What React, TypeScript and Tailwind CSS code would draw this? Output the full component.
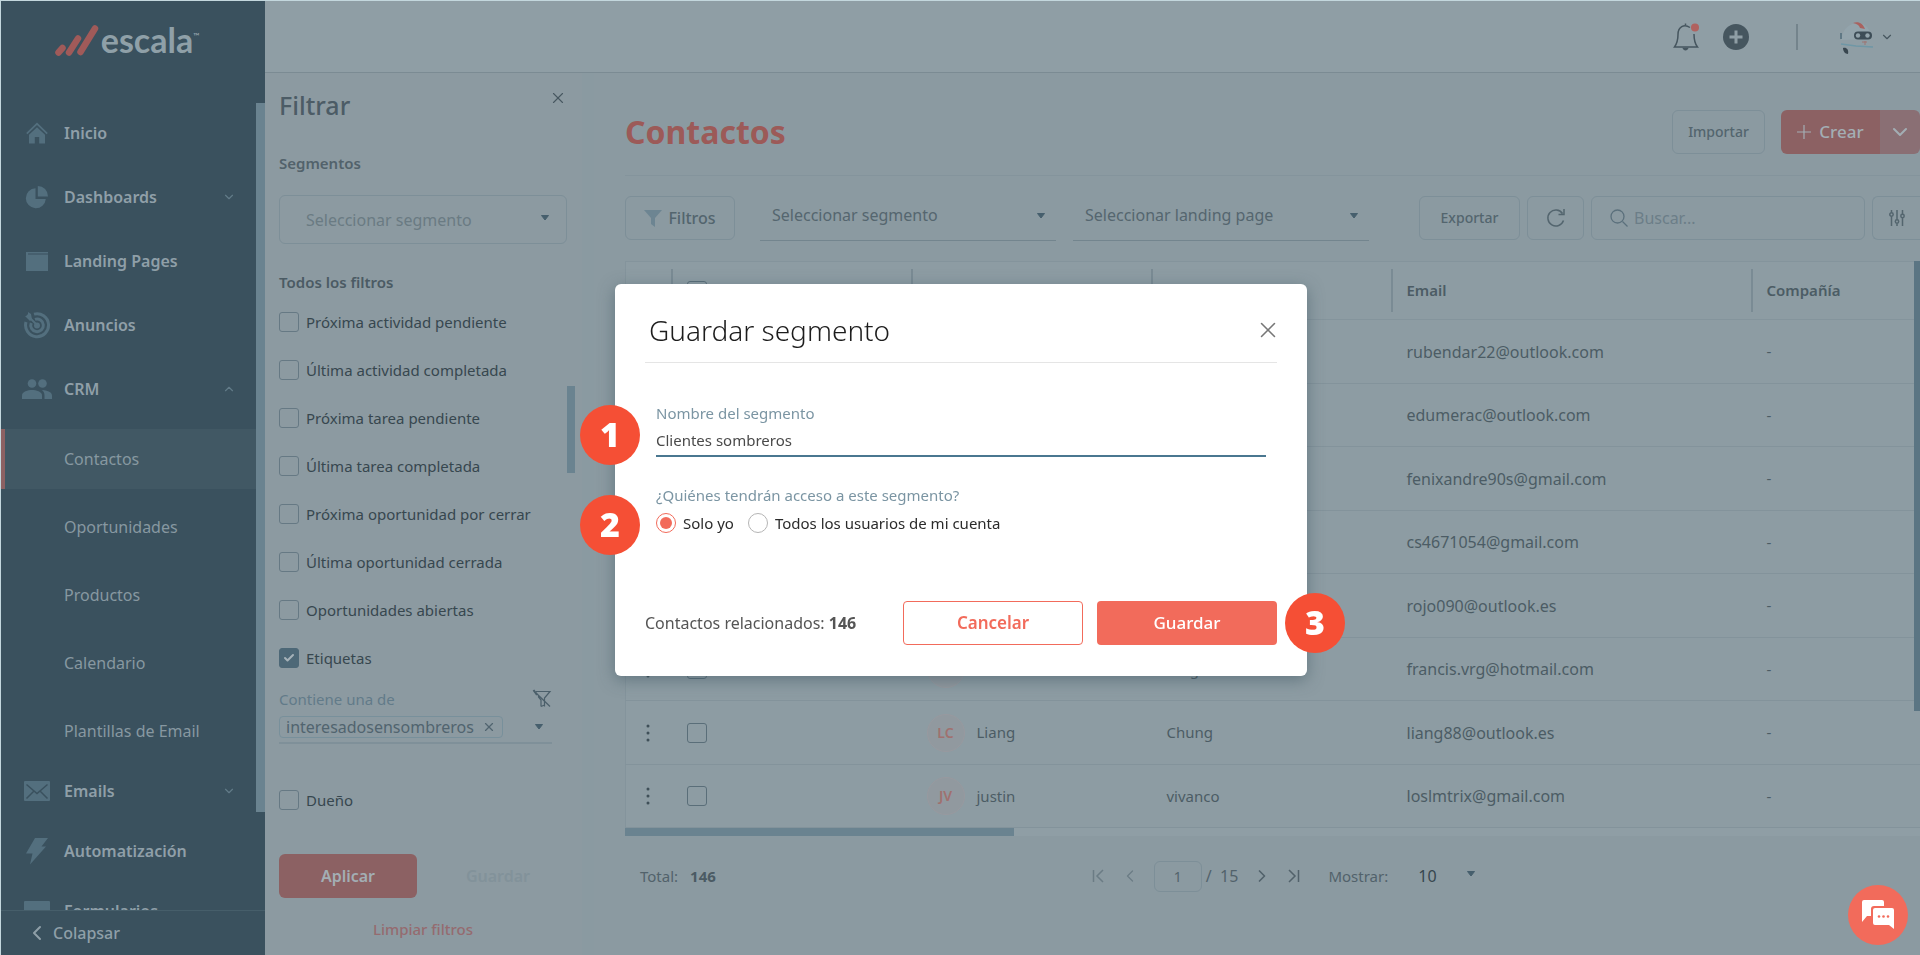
import { useState, type ReactNode } from 'react'
import clsx from 'clsx'
import { LuCheck, LuChevronDown, LuChevronLeft, LuChevronRight, LuChevronUp, LuX } from 'react-icons/lu'

type NavItem = { label: string; icon: ReactNode; chevron?: 'up' | 'down' }

const HomeIcon = () => (
  <svg viewBox="0 0 24 24" className="h-6 w-6" fill="currentColor">
    <path d="M12 1.500 1.200 12l1.200 1.200L12 4l9.600 9.200 1.200-1.200z" />
    <path d="M12 6.200 4 13.800V22.500h5.800v-6.500h4.400v6.500H20v-8.700z" />
  </svg>
)

const PieIcon = () => (
  <svg viewBox="0 0 24 24" className="h-6 w-6" fill="currentColor">
    <path d="M10.500 3.200A10 10 0 1 0 20.800 14H10.500z" />
    <path d="M12.800 1v10.500H23A10.300 10.300 0 0 0 12.800 1z" />
  </svg>
)

const WindowIcon = () => (
  <svg viewBox="0 0 24 24" className="h-6 w-6" fill="currentColor">
    <path d="M1 3h22v1.500H1zM1 5.500h22v16.500H1z" />
    <path d="M1 3h2v4H1z" />
  </svg>
)

const TargetIcon = () => (
  <svg viewBox="0 0 28 28" className="h-7 w-7" fill="none" stroke="currentColor" strokeWidth="3">
    <path d="M11 3.100A11.500 11.500 0 1 1 3 11" />
    <path d="M12 8.400A6.300 6.300 0 1 1 8.200 12" />
    <circle cx="14" cy="14.500" r="1.500" />
    <path d="M4 4l9 9" strokeWidth="2" />
    <path d="M2 5l5 5 2-1.500L8 3 5 1v4z" fill="currentColor" stroke="none" />
  </svg>
)

const PeopleIcon = () => (
  <svg viewBox="0 0 30 20" className="h-5 w-[30px]" fill="currentColor">
    <circle cx="10" cy="4.500" r="4.300" />
    <circle cx="20.500" cy="4.500" r="4.300" />
    <path d="M0 20v-3.500C0 12.500 6 11 10 11s10 1.500 10 5.500V20z" />
    <path d="M20.500 11c4 .3 9.500 1.800 9.500 5.500V20h-7.500v-3.500c0-2.300-.9-4.100-2.600-5.400z" />
  </svg>
)

const MailIcon = () => (
  <svg viewBox="0 0 26 20" className="h-5 w-[26px]">
    <rect width="26" height="20" rx="1" fill="currentColor" />
    <path d="M2.500 3.500 13 12.500l10.500-9M2.500 17.500l7-7M23.500 17.500l-7-7" fill="none" stroke="#3a515e" strokeWidth="1.500" />
  </svg>
)

const BoltIcon = () => (
  <svg viewBox="0 0 24 28" className="h-7 w-6" fill="currentColor">
    <path d="M10 1h13l-6.500 8.500H21L5 27.500l2.500-11H1z" />
  </svg>
)

const FormIcon = () => (
  <svg viewBox="0 0 26 20" className="h-5 w-[26px]" fill="currentColor">
    <rect width="26" height="20" rx="1" />
  </svg>
)

const Caret = ({ className }: { className?: string }) => (
  <svg viewBox="0 0 10 8" className={clsx('pointer-events-none h-2 w-[10px]', className)} fill="#465f6d">
    <path d="M1.500 1.500h7L5 6z" stroke="#465f6d" strokeLinejoin="round" />
  </svg>
)

const mainNav: NavItem[] = [
  { label: 'Inicio', icon: <HomeIcon /> },
  { label: 'Dashboards', icon: <PieIcon />, chevron: 'down' },
  { label: 'Landing Pages', icon: <WindowIcon /> },
  { label: 'Anuncios', icon: <TargetIcon /> },
  { label: 'CRM', icon: <PeopleIcon />, chevron: 'up' },
]

const crmNav = ['Contactos', 'Oportunidades', 'Productos', 'Calendario', 'Plantillas de Email']

const moreNav: NavItem[] = [
  { label: 'Emails', icon: <MailIcon />, chevron: 'down' },
  { label: 'Automatización', icon: <BoltIcon /> },
  { label: 'Formularios', icon: <FormIcon /> },
]

const filters = [
  'Próxima actividad pendiente',
  'Última actividad completada',
  'Próxima tarea pendiente',
  'Última tarea completada',
  'Próxima oportunidad por cerrar',
  'Última oportunidad cerrada',
  'Oportunidades abiertas',
  'Etiquetas',
]

const contacts = [
  { initials: '', name: '', surname: '', email: 'rubendar22@outlook.com' },
  { initials: '', name: '', surname: '', email: 'edumerac@outlook.com' },
  { initials: '', name: '', surname: '', email: 'fenixandre90s@gmail.com' },
  { initials: '', name: '', surname: '', email: 'cs4671054@gmail.com' },
  { initials: '', name: '', surname: '', email: 'rojo090@outlook.es' },
  { initials: 'FV', name: 'Francis', surname: 'Vargas', email: 'francis.vrg@hotmail.com' },
  { initials: 'LC', name: 'Liang', surname: 'Chung', email: 'liang88@outlook.es' },
  { initials: 'JV', name: 'justin', surname: 'vivanco', email: 'loslmtrix@gmail.com' },
]

function Logo() {
  return (
    <a href="#inicio" aria-label="escala" className="flex items-center gap-0.5 text-[#8fa0a8]">
      <svg viewBox="0 0 44 31" className="h-[31px] w-11" stroke="#a05a59" strokeLinecap="round" strokeWidth="6.500">
        <path d="M3.500 27.500 7.500 23M14 27.500l9-14M25.500 27 40 3.500" />
      </svg>
      <span className="flex items-start font-[Lato,sans-serif] text-[34px] leading-10 font-bold">
        escala<span className="mt-3 text-[8px] leading-none">™</span>
      </span>
    </a>
  )
}

function NavLink({ item, className }: { item: NavItem; className?: string }) {
  return (
    <a href="#nav" className={clsx('flex items-center pr-5 pl-[21px] font-semibold text-[#8f9fa8]', className)}>
      <span className="mr-3 flex w-[30px] justify-center text-[#536f7e]">{item.icon}</span>
      {item.label}
      {item.chevron === 'down' && <LuChevronDown className="ml-auto h-3.5 w-3.5 text-[#627b88]" />}
      {item.chevron === 'up' && <LuChevronUp className="ml-auto h-3.5 w-3.5 text-[#627b88]" />}
    </a>
  )
}

function Sidebar() {
  return (
    <aside className="relative flex w-[264px] shrink-0 flex-col bg-[#3a515e]">
      <div className="flex h-[100px] shrink-0 items-start justify-center pt-[19px] pr-3">
        <Logo />
      </div>
      <nav className="min-h-0 flex-1 overflow-hidden pr-[9px] text-base">
        {mainNav.map((item) => (
          <NavLink key={item.label} item={item} className="h-16" />
        ))}
        <ul className="flex flex-col gap-2 pt-2">
          {crmNav.map((label, i) => (
            <li key={label}>
              <a
                href="#crm"
                className={clsx(
                  'flex h-15 items-center border-l-4 pl-[59px] text-[#8798a1]',
                  i === 0 ? 'border-[#8c6163] bg-[#415864]' : 'border-transparent',
                )}
              >
                {label}
              </a>
            </li>
          ))}
        </ul>
        {moreNav.map((item) => (
          <NavLink key={item.label} item={item} className="h-15" />
        ))}
      </nav>
      <div className="absolute top-[102px] right-0 h-[709px] w-[9px] bg-[#6a8390]" />
      <button className="flex h-[45px] shrink-0 items-center gap-1 border-t border-[#465e6a] pl-6 text-base font-medium text-[#8f9fa8]">
        <LuChevronLeft className="h-6 w-6" />
        Colapsar
      </button>
    </aside>
  )
}

function Avatar() {
  return (
    <svg viewBox="0 0 36 36" className="h-9 w-9">
      <path d="M3 21C5 9 12 4 20 4s13 7 13 16z" fill="#93a4ac" />
      <path d="M15 4c6-2 10 1 12 6l-5-1c-1-3-3-4-7-5z" fill="#a9625f" />
      <path d="M3 14v6" stroke="#5f7885" strokeWidth="2" />
      <rect x="16" y="12.500" width="18" height="8" rx="4" fill="#3d4d57" />
      <circle cx="20" cy="16.500" r="2.200" fill="#93a4ac" />
      <circle cx="29.500" cy="16.500" r="2.200" fill="#93a4ac" />
      <path d="M24 23h5M27 22v4" stroke="#9d7473" />
      <path d="M3 25l15 2 17 1" stroke="#6f97a6" strokeWidth="1.500" fill="none" />
      <path d="M5 29c3-1 6 1 5 6-3 0-5-3-5-6z" fill="#38464f" />
    </svg>
  )
}

function TopBar() {
  return (
    <header className="flex h-[72px] shrink-0 items-center justify-end border-b border-[#7b8b93] pr-[26px] text-[#46565f]">
      <button aria-label="Notificaciones">
        <svg viewBox="0 0 26 28" className="h-7 w-[26px]" fill="none" stroke="currentColor" strokeWidth="1.500">
          <path d="M17 4.500c-6-4-12-.5-12 7 0 6-1 9-3.500 12.500h23C22 21 21 17 21 11" />
          <path d="M12.500 2V.5M10.500 25.500a2.200 2.200 0 0 0 4 0z" fill="currentColor" />
          <circle cx="22" cy="4.500" r="4" fill="#b0625f" stroke="none" />
        </svg>
      </button>
      <button aria-label="Agregar" className="ml-6">
        <svg viewBox="0 0 26 26" className="h-[26px] w-[26px]">
          <circle cx="13" cy="13" r="13" fill="#46565f" />
          <path d="M13 6.500v13M6.500 13h13" stroke="#8f9ea5" strokeWidth="3" />
        </svg>
      </button>
      <span className="mr-10 ml-[47px] h-[26px] w-0.5 bg-[#74848c]" />
      <button aria-label="Cuenta" className="flex items-center gap-1.5">
        <Avatar />
        <LuChevronDown className="h-3.5 w-3.5" />
      </button>
    </header>
  )
}

function Checkbox({ label, checked }: { label: string; checked?: boolean }) {
  return (
    <label className="flex h-12 items-center gap-[7px] text-[15px] text-[#37474f]">
      <span className="relative flex h-5 w-5">
        <input
          type="checkbox"
          defaultChecked={checked}
          className="peer h-5 w-5 appearance-none rounded-[3px] border border-[#667984] checked:border-[#4d6877] checked:bg-[#4d6877]"
        />
        <LuCheck className="pointer-events-none absolute inset-1 hidden h-3 w-3 stroke-4 text-[#a5b2b9] peer-checked:block" />
      </span>
      {label}
    </label>
  )
}

function FilterPanel() {
  return (
    <section className="relative flex w-[317px] shrink-0 flex-col bg-[#8c9aa1] pt-4 pr-[15px] pl-3.5">
      <div className="flex h-8 items-start justify-between">
        <h2 className="text-[25px] leading-8 font-medium text-[#4c5c66]">Filtrar</h2>
        <button aria-label="Cerrar filtros" className="text-[#475761]">
          <LuX className="h-[18px] w-[18px]" strokeWidth={1.5} />
        </button>
      </div>
      <label htmlFor="segmento" className="mt-8 text-[15px] leading-5 font-semibold text-[#52626b]">
        Segmentos
      </label>
      <div className="relative mt-[22px]">
        <select
          id="segmento"
          className="h-[49px] w-full appearance-none rounded-md border border-[#7d8f98] px-6.5 text-base text-[#6a7b83]"
        >
          <option>Seleccionar segmento</option>
        </select>
        <Caret className="absolute top-[19px] right-[17px]" />
      </div>
      <h3 className="mt-[26px] text-[15px] leading-6 font-semibold text-[#4b5b64]">Todos los filtros</h3>
      <div className="mt-1">
        {filters.map((f) => (
          <Checkbox key={f} label={f} checked={f === 'Etiquetas'} />
        ))}
      </div>
      <div className="mr-[15px] h-[62px] border-b-2 border-[#7f9099]">
        <div className="flex h-[34px] items-center justify-between text-[15px] text-[#627b89]">
          Contiene una de
          <button aria-label="Quitar filtro">
            <svg viewBox="0 0 20 20" className="h-5 w-5" fill="none" stroke="#4b5f6a" strokeWidth="1.200">
              <path d="M4 2.500h14l-5.500 6.500v8.500M6.500 6v2l2.500 3v6.500M9 17.500l3.500-1.500M2 2l16 15.500" />
              <path d="M1.500 1 5 6" strokeWidth="2" />
            </svg>
          </button>
        </div>
        <div className="flex items-center justify-between pr-2">
          <span className="flex h-[22px] items-center gap-2 rounded border border-[#78909b] pr-1.5 pl-1.5 text-base text-[#51646f]">
            interesadosensombreros
            <button aria-label="Quitar etiqueta">
              <LuX className="h-3.5 w-3.5" />
            </button>
          </span>
          <Caret />
        </div>
      </div>
      <div className="mt-8">
        <Checkbox label="Dueño" />
      </div>
      <div className="mt-[30px] flex gap-3 text-base font-semibold">
        <button className="h-11 w-[139px] rounded-md bg-[#8c6163] text-[#a3aeb4]">Aplicar</button>
        <button disabled className="h-11 w-[139px] rounded-md text-[#82929a]">
          Guardar
        </button>
      </div>
      <button className="mt-[19px] self-center text-[15px] leading-6 font-medium text-[#956b6f]">Limpiar filtros</button>
      <div className="absolute top-[313px] right-[7px] h-[87px] w-2 bg-[#6a8390]" />
    </section>
  )
}

function ToolbarSelect({ label }: { label: string }) {
  return (
    <div className="relative w-[296px]">
      <select
        aria-label={label}
        className="h-[46px] w-full appearance-none border-b border-[#73858e] px-3 pb-1 text-base text-[#55666f]"
      >
        <option>{label}</option>
      </select>
      <Caret className="absolute top-[17px] right-2.5" />
    </div>
  )
}

const outline = 'flex h-11 items-center justify-center rounded-md border border-[#7d8f98] text-[#53656e]'

function Toolbar() {
  return (
    <div className="flex h-[86px] items-center border-t border-[#84949c] pb-0.5">
      <button className={clsx(outline, 'w-[110px] gap-1.5 text-base font-medium')}>
        <svg viewBox="0 0 18 18" className="h-[18px] w-[18px]" fill="#6d8592">
          <path d="M0 1h18l-7 8v9l-4-3V9z" />
        </svg>
        Filtros
      </button>
      <div className="ml-[25px] flex gap-[17px]">
        <ToolbarSelect label="Seleccionar segmento" />
        <ToolbarSelect label="Seleccionar landing page" />
      </div>
      <div className="ml-auto flex gap-[7px] text-sm font-medium">
        <button className={clsx(outline, 'w-[101px]')}>Exportar</button>
        <button aria-label="Actualizar" className={clsx(outline, 'w-[57px]')}>
          <svg viewBox="0 0 20 20" className="h-5 w-5" fill="none" stroke="currentColor" strokeWidth="1.500">
            <path d="M17.500 12.500A8 8 0 1 1 16.500 5.500M18 1v5.500h-5.500" />
          </svg>
        </button>
        <label className={clsx(outline, 'w-[274px] justify-start gap-1.5 pl-[18px]')}>
          <svg viewBox="0 0 18 18" className="h-[18px] w-[18px]" fill="none" stroke="#5b707c" strokeWidth="1.300">
            <circle cx="7.500" cy="7.500" r="6.500" />
            <path d="m12.500 12.500 5 5" />
          </svg>
          <input aria-label="Buscar" placeholder="Buscar..." className="w-50 text-base font-normal outline-none placeholder:text-[#6c7e88]" />
        </label>
        <button aria-label="Columnas" className={clsx(outline, 'w-12 rounded-r-none border-r-0')}>
          <svg viewBox="0 0 16 16" className="h-4 w-4" fill="none" stroke="currentColor" strokeWidth="1.500">
            <path d="M2.500 0v2.500M2.500 6.500V16M8 0v9.500M8 13.500V16M13.500 0v4M13.500 8v8" />
            <circle cx="2.500" cy="4.500" r="1.700" />
            <circle cx="8" cy="11.500" r="1.700" />
            <circle cx="13.500" cy="6" r="1.700" />
          </svg>
        </button>
      </div>
    </div>
  )
}

function Th({ children }: { children?: ReactNode }) {
  return (
    <th className="p-0 text-left">
      <div className="flex h-[43px] items-center border-l-2 border-[#7a8b94] pl-3.5 text-[15px] font-semibold">{children}</div>
    </th>
  )
}

function RowCheck({ label }: { label: string }) {
  return (
    <input
      type="checkbox"
      aria-label={label}
      className="block h-5 w-5 appearance-none rounded-[3px] border border-[#5a6e79]"
    />
  )
}

function ContactsTable() {
  return (
    <div className="relative">
      <table className="w-full table-fixed border-l border-[#84949c] bg-[#8d9ca3] text-[15px] text-[#4c5c65]">
        <colgroup>
          <col className="w-[45px]" />
          <col className="w-60" />
          <col className="w-60" />
          <col className="w-60" />
          <col className="w-[360px]" />
          <col />
        </colgroup>
        <thead>
          <tr className="h-[58px] border-y border-[#84949c]">
            <th className="p-0" />
            <Th>
              <RowCheck label="Seleccionar todos" />
            </Th>
            <Th />
            <Th />
            <Th>Email</Th>
            <Th>Compañía</Th>
          </tr>
        </thead>
        <tbody>
          {contacts.map((c) => (
            <tr key={c.email} className="h-[63px] border-b border-[#83939b] odd:h-16">
              <td className="p-0">
                <button aria-label="Acciones" className="flex w-full justify-center">
                  <svg viewBox="0 0 4 18" className="h-[18px] w-1" fill="#3f4f58">
                    <circle cx="2" cy="2" r="1.500" />
                    <circle cx="2" cy="9" r="1.500" />
                    <circle cx="2" cy="16" r="1.500" />
                  </svg>
                </button>
              </td>
              <td className="px-4 py-0">
                <RowCheck label={c.email} />
              </td>
              <td className="px-4 py-0">
                {c.initials && (
                  <div className="flex items-center gap-3">
                    <span className="flex h-[38px] w-[38px] items-center justify-center rounded-full border border-[#98999f] bg-[#91999f] text-sm font-semibold text-[#a0716f]">
                      {c.initials}
                    </span>
                    {c.name}
                  </div>
                )}
              </td>
              <td className="px-4 py-0">{c.surname}</td>
              <td className="px-4 py-0 text-base">{c.email}</td>
              <td className="px-4 py-0">-</td>
            </tr>
          ))}
        </tbody>
      </table>
      <div className="absolute top-0 right-0 h-[450px] w-1.5 bg-[#5b7583]" />
      <div className="h-2 bg-[#8f9ea5]">
        <div className="h-2 w-[30%] bg-[#6a8390]" />
      </div>
    </div>
  )
}

function PageFooter() {
  return (
    <footer className="flex h-20 items-center pl-[15px] text-[15px] text-[#52626b]">
      Total:
      <b className="ml-3 font-bold text-[#4b5b64]">146</b>
      <div className="ml-[376px] flex items-center">
        <button aria-label="Primera página" className="text-[#6b7c85]">
          <svg viewBox="0 0 12 14" className="h-3.5 w-3" fill="none" stroke="currentColor" strokeWidth="1.500">
            <path d="M1.500 1v12M11 1 5 7l6 6" />
          </svg>
        </button>
        <button aria-label="Anterior" className="ml-4 text-[#6b7c85]">
          <LuChevronLeft className="h-5 w-5" strokeWidth={1.5} />
        </button>
        <input
          aria-label="Página"
          defaultValue="1"
          className="ml-3.5 h-[31px] w-12 rounded-md border border-[#7d8f98] text-center text-sm"
        />
        <span className="ml-1 text-base">/&nbsp; 15</span>
        <button aria-label="Siguiente" className="ml-3.5">
          <LuChevronRight className="h-5 w-5" strokeWidth={2} />
        </button>
        <button aria-label="Última página" className="ml-4">
          <svg viewBox="0 0 12 14" className="h-3.5 w-3" fill="none" stroke="currentColor" strokeWidth="1.500">
            <path d="M10.500 1v12M1 1l6 6-6 6" />
          </svg>
        </button>
        <label htmlFor="mostrar" className="ml-7">
          Mostrar:
        </label>
        <div className="relative ml-[30px]">
          <select id="mostrar" className="w-[58px] appearance-none text-base text-[#37474f]">
            <option>10</option>
          </select>
          <Caret className="absolute top-1.5 right-0" />
        </div>
      </div>
    </footer>
  )
}

const Step = ({ n, className }: { n: number; className: string }) => (
  <span
    className={clsx(
      'absolute flex h-15 w-15 items-center justify-center rounded-full bg-[#f54f35] text-[34px] font-black text-white',
      className,
    )}
  >
    {n}
  </span>
)

function Radio({ label, checked }: { label: string; checked?: boolean }) {
  return (
    <label className="flex items-center gap-[7px]">
      <input
        type="radio"
        name="acceso"
        defaultChecked={checked}
        className="h-5 w-5 appearance-none rounded-full border border-[#b5b5b5] checked:border-[#f26b5b] checked:bg-[#f26b5b] checked:bg-clip-content checked:p-[3px]"
      />
      {label}
    </label>
  )
}

function SaveSegmentModal() {
  const [name, setName] = useState('Clientes sombreros')

  return (
    <div className="fixed inset-0 flex items-center justify-center pt-1 pl-0.5">
      <div
        role="dialog"
        aria-label="Guardar segmento"
        className="w-full max-w-[692px] rounded-md bg-white px-[30px] pb-[31px] shadow-[0_4px_16px_rgba(58,81,94,0.5)]"
      >
        <div className="flex h-[79px] items-center justify-between border-b border-[#e5e5e5] pt-3.5 pl-1">
          <h2 className="text-[28px] font-light text-[#1d1d1d]">Guardar segmento</h2>
          <button aria-label="Cerrar" className="text-[#777]">
            <LuX className="-mr-1 h-[26px] w-[26px]" strokeWidth={1.4} />
          </button>
        </div>
        <div className="px-[11px] pt-[38px] text-[15px]">
          <div className="relative">
            <Step n={1} className="top-1 -left-[76px]" />
            <label htmlFor="nombre" className="block leading-6 text-[#7b95a3]">
              Nombre del segmento
            </label>
            <input
              id="nombre"
              value={name}
              onChange={(e) => setName(e.target.value)}
              className="h-8 w-full border-b-2 border-[#4a7790] text-[#4a4a4a] outline-none"
            />
          </div>
          <div role="radiogroup" aria-labelledby="acceso" className="relative mt-[26px]">
            <Step n={2} className="top-3 -left-[76px]" />
            <p id="acceso" className="leading-6 text-[#7b95a3]">
              ¿Quiénes tendrán acceso a este segmento?
            </p>
            <div className="mt-1 flex gap-3.5 leading-6 text-[#2b2b2b]">
              <Radio label="Solo yo" checked />
              <Radio label="Todos los usuarios de mi cuenta" />
            </div>
          </div>
        </div>
        <div className="relative mt-[66px] flex items-center">
          <p className="mr-auto text-base text-[#555]">
            Contactos relacionados: <b className="font-bold">146</b>
          </p>
          <button className="h-11 w-45 rounded border border-[#f26b5b] text-[17px] font-semibold text-[#f26b5b]">
            Cancelar
          </button>
          <button className="ml-3.5 h-11 w-45 rounded bg-[#f26b5b] text-[17px] font-medium text-white">Guardar</button>
          <Step n={3} className="-top-2 -right-[68px]" />
        </div>
      </div>
    </div>
  )
}

export default function App() {
  return (
    <div className="flex h-screen overflow-hidden border-t border-l border-[#c3d7dd] bg-[#8c9aa1] font-['Noto_Sans',sans-serif]">
      <Sidebar />
      <div className="flex min-w-0 flex-1 flex-col bg-[#8f9ea5]">
        <TopBar />
        <div className="flex min-h-0 flex-1 bg-[#8a9aa1]">
          <FilterPanel />
          <main className="ml-3 min-w-0 flex-1 bg-[#8b9aa1] pl-[31px]">
            <div className="flex h-[102px] items-center justify-between pt-4">
              <h1 className="text-[32px] font-bold text-[#9c5a58]">Contactos</h1>
              <div className="flex gap-4">
                <button className={clsx(outline, 'w-[93px] text-sm font-medium')}>Importar</button>
                <div className="flex h-11 overflow-hidden rounded-md text-[#a3aeb4]">
                  <button className="flex w-[99px] items-center justify-center gap-2 bg-[#8c6163] text-[17px] font-medium">
                    <svg viewBox="0 0 14 14" className="h-3.5 w-3.5" stroke="currentColor" strokeWidth="1.200">
                      <path d="M7 0v14M0 7h14" />
                    </svg>
                    Crear
                  </button>
                  <button aria-label="Más opciones" className="flex w-10 items-center justify-center bg-[#8a6f74]">
                    <LuChevronDown className="h-6 w-6" />
                  </button>
                </div>
              </div>
            </div>
            <Toolbar />
            <ContactsTable />
            <PageFooter />
          </main>
        </div>
      </div>
      <SaveSegmentModal />
      <button
        aria-label="Chat"
        className="fixed right-3 bottom-[10px] flex h-15 w-15 items-center justify-center rounded-full bg-[#f26b5b]"
      >
        <svg viewBox="0 0 32 30" className="h-[30px] w-8" fill="#fff">
          <path d="M2 0h18a2 2 0 0 1 2 2v4H12a3 3 0 0 0-3 3v7H5l-5 6V2a2 2 0 0 1 2-2z" />
          <path d="M13 8h17a2 2 0 0 1 2 2v19l-5-4H13a2 2 0 0 1-2-2V10a2 2 0 0 1 2-2z" />
          <g fill="#f26b5b">
            <circle cx="17" cy="16.500" r="1.300" />
            <circle cx="21.500" cy="16.500" r="1.300" />
            <circle cx="26" cy="16.500" r="1.300" />
          </g>
        </svg>
      </button>
    </div>
  )
}
